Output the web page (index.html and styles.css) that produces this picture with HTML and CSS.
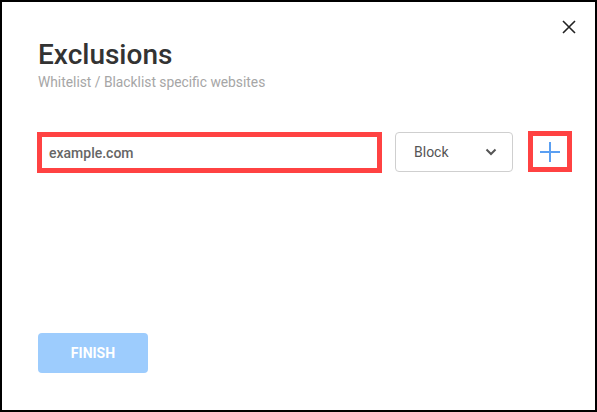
FILE: index.html
```html
<!DOCTYPE html>
<html>
<head>
<meta charset="utf-8">
<link rel="stylesheet" href="styles.css">
</head>
<body>
<div class="dialog">
  <div class="top">
    <button class="close" aria-label="Close">
      <svg width="14" height="14" viewBox="0 0 14 14"><path d="M1 1L13 13M13 1L1 13" stroke="#222" stroke-width="1.6" fill="none"/></svg>
    </button>
  </div>
  <h1 class="title">Exclusions</h1>
  <p class="subtitle">Whitelist / Blacklist specific websites</p>
  <div class="row">
    <div class="field"><span class="field-text">example.com</span></div>
    <div class="select">
      <span>Block</span>
      <svg width="12" height="8" viewBox="0 0 12 8"><path d="M1.5 1.5L6 6L10.5 1.5" stroke="#555" stroke-width="2" fill="none"/></svg>
    </div>
    <div class="add">
      <svg width="22" height="22" viewBox="0 0 22 22"><path d="M11 1V21M1 11H21" stroke="#5a9ff2" stroke-width="2" fill="none"/></svg>
    </div>
  </div>
  <div class="footer">
    <button class="finish">FINISH</button>
  </div>
</div>
</body>
</html>
```

FILE: styles.css
```css
html, body {
  margin: 0;
  padding: 0;
  background: #fff;
}
.dialog {
  width: 597px;
  height: 412px;
  box-sizing: border-box;
  border: 2px solid #000;
  padding: 18px 19px 37px 35px;
  display: flex;
  flex-direction: column;
  font-family: Roboto, "Liberation Sans", sans-serif;
}
.top {
  display: flex;
  justify-content: flex-end;
  height: 16px;
}
.close {
  border: 0;
  background: none;
  padding: 0;
  width: 14px;
  height: 14px;
  display: flex;
}
.title {
  margin: 2px 0 0 1px;
  font-size: 28px;
  line-height: 34px;
  font-weight: 500;
  color: #333;
}
.subtitle {
  margin: 1px 0 0 1px;
  font-size: 13.8px;
  line-height: 18px;
  color: #a6a6a6;
}
.row {
  display: flex;
  align-items: flex-start;
  margin-top: 41px;
}
.field {
  width: 345px;
  height: 41px;
  box-sizing: border-box;
  border: 5px solid #ff4242;
  display: flex;
  align-items: center;
  padding-left: 7px;
}
.field-text {
  font-size: 14px;
  font-weight: 500;
  color: #666;
}
.select {
  margin-left: 13px;
  width: 118px;
  height: 40px;
  box-sizing: border-box;
  border: 1px solid #cfcfcf;
  border-radius: 4px;
  display: flex;
  align-items: center;
  justify-content: space-between;
  padding: 0 15px 0 18px;
  font-size: 14px;
  color: #555;
}
.add {
  margin-left: 15px;
  margin-top: -1px;
  width: 44px;
  height: 41px;
  box-sizing: border-box;
  border: 5px solid #ff4242;
  display: flex;
  align-items: center;
  justify-content: center;
}
.footer {
  margin-top: auto;
  display: flex;
}
.finish {
  margin-left: 1px;
  width: 110px;
  height: 40px;
  border: 0;
  border-radius: 4px;
  background: #9dccfd;
  color: #fff;
  font-family: Roboto, "Liberation Sans", sans-serif;
  font-size: 14px;
  font-weight: 700;
}
```
